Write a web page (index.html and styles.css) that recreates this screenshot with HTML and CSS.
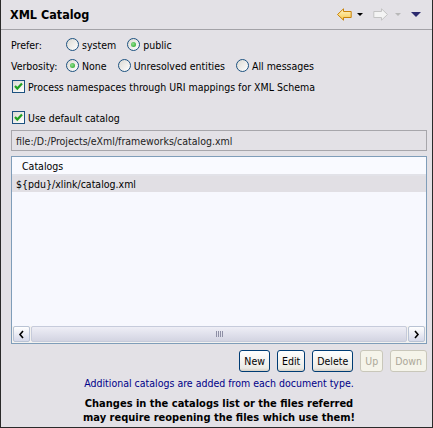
FILE: index.html
```html
<!DOCTYPE html>
<html>
<head>
<meta charset="utf-8">
<link rel="stylesheet" href="styles.css">
</head>
<body>
<div class="panel">
  <div class="titlebar">
    <span class="title">XML Catalog</span>
    <div class="tools">
      <svg class="arrow" width="15" height="13" viewBox="0 0 15 13">
        <defs><linearGradient id="gy" x1="0" y1="0" x2="0" y2="1"><stop offset="0" stop-color="#fff6c8"/><stop offset="1" stop-color="#f7c84a"/></linearGradient></defs>
        <path d="M0.5 6.5 L6.5 0.8 L6.5 3.5 L14.2 3.5 L14.2 9.5 L6.5 9.5 L6.5 12.2 Z" fill="url(#gy)" stroke="#c8820a" stroke-width="1" stroke-linejoin="round"/>
      </svg>
      <span class="tri black"></span>
      <svg class="arrow fwd" width="15" height="13" viewBox="0 0 15 13">
        <path d="M14.5 6.5 L8.5 0.8 L8.5 3.5 L0.8 3.5 L0.8 9.5 L8.5 9.5 L8.5 12.2 Z" fill="#f4f4f4" stroke="#c4c4c4" stroke-width="1" stroke-linejoin="round"/>
      </svg>
      <span class="tri grey"></span>
      <span class="tri navy"></span>
    </div>
  </div>
  <div class="content">
    <div class="row">
      <span class="label">Prefer:</span>
      <span class="opt"><span class="radio"></span>system</span>
      <span class="opt"><span class="radio on"></span>public</span>
    </div>
    <div class="row">
      <span class="label">Verbosity:</span>
      <span class="opt"><span class="radio on"></span>None</span>
      <span class="opt"><span class="radio"></span>Unresolved entities</span>
      <span class="opt"><span class="radio"></span>All messages</span>
    </div>
    <div class="row">
      <span class="check"><svg width="11" height="11" viewBox="0 0 11 11"><path d="M2 5 L4.3 7.6 L9 2.5" fill="none" stroke="#21a121" stroke-width="2.2"/></svg></span>
      <span class="clabel">Process namespaces through URI mappings for XML Schema</span>
    </div>
    <div class="row gap">
      <span class="check"><svg width="11" height="11" viewBox="0 0 11 11"><path d="M2 5 L4.3 7.6 L9 2.5" fill="none" stroke="#21a121" stroke-width="2.2"/></svg></span>
      <span class="clabel">Use default catalog</span>
    </div>
    <div class="field">file:/D:/Projects/eXml/frameworks/catalog.xml</div>
    <div class="table">
      <div class="thead">Catalogs</div>
      <div class="trow">${pdu}/xlink/catalog.xml</div>
      <div class="tfill"></div>
      <div class="hscroll">
        <span class="sbtn"><svg width="7" height="9" viewBox="0 0 7 9"><path d="M5 1 L2 4.5 L5 8" fill="none" stroke="#000" stroke-width="1.6"/></svg></span>
        <span class="thumb"><span class="grip"></span></span>
        <span class="sbtn"><svg width="7" height="9" viewBox="0 0 7 9"><path d="M2 1 L5 4.5 L2 8" fill="none" stroke="#000" stroke-width="1.6"/></svg></span>
      </div>
    </div>
    <div class="buttons">
      <button class="btn">New</button>
      <button class="btn">Edit</button>
      <button class="btn">Delete</button>
      <button class="btn off">Up</button>
      <button class="btn off">Down</button>
    </div>
    <p class="note">Additional catalogs are added from each document type.</p>
    <p class="warn">Changes in the catalogs list or the files referred<br>may require reopening the files which use them!</p>
  </div>
</div>
</body>
</html>
```
FILE: styles.css
```css
html, body {
  margin: 0;
  padding: 0;
  background: #e3e1e6;
}
.panel {
  width: 433px;
  height: 428px;
  box-sizing: border-box;
  border-left: 1px solid #2a2a2a;
  border-right: 1px solid #2a2a2a;
  border-bottom: 1px solid #2a2a2a;
  background: #e3e1e6;
  font-family: "DejaVu Sans Condensed", "Liberation Sans", sans-serif;
  font-size: 10.5px;
  color: #000;
}
.titlebar {
  height: 29px;
  border-bottom: 1px solid #a3a2a7;
  display: flex;
  align-items: center;
  padding: 0 11px 0 9px;
}
.title {
  font-weight: bold;
  font-size: 12.5px;
}
.tools {
  margin-left: auto;
  display: flex;
  align-items: center;
}
.arrow { display: block; }
.tri {
  width: 0;
  height: 0;
  border-style: solid;
}
.tri.black {
  border-width: 3px 3px 0 3px;
  border-color: #000 transparent transparent transparent;
  margin: 0 10px 0 5px;
}
.tri.grey {
  border-width: 3px 3px 0 3px;
  border-color: #b8b8b8 transparent transparent transparent;
  margin: 0 0 0 7px;
}
.tri.navy {
  border-width: 5px 5px 0 5px;
  border-color: #2c2a6e transparent transparent transparent;
  margin: 0 0 0 10px;
}
.content {
  padding: 4px 5px 0 10px;
}
.row {
  height: 21px;
  display: flex;
  align-items: center;
}
.row.gap { margin-top: 10px; }
.label {
  width: 55px;
}
.opt {
  display: flex;
  align-items: center;
  gap: 3px;
  margin-right: 11px;
}
.radio {
  width: 13px;
  height: 13px;
  box-sizing: border-box;
  border: 1px solid #1c5180;
  border-radius: 50%;
  background: linear-gradient(135deg, #dcdad3, #ffffff);
  display: flex;
  align-items: center;
  justify-content: center;
}
.radio.on::after {
  content: "";
  width: 5px;
  height: 5px;
  border-radius: 50%;
  background: radial-gradient(circle at 40% 40%, #8ee08e, #21a121);
}
.check {
  width: 13px;
  height: 13px;
  box-sizing: border-box;
  margin-left: 1px;
  border: 1px solid #1c5180;
  background: linear-gradient(135deg, #dcdad3, #ffffff);
  display: flex;
  align-items: center;
  justify-content: center;
}
.check svg { display: block; }
.clabel { margin-left: 3px; }
.field {
  margin-top: 2px;
  height: 21px;
  box-sizing: border-box;
  border: 1px solid #a7a6ab;
  padding-left: 4px;
  display: flex;
  align-items: center;
  color: #222;
}
.table {
  margin-top: 5px;
  height: 188px;
  box-sizing: border-box;
  border: 1px solid #7f9db9;
  background: #f7f8fe;
  display: flex;
  flex-direction: column;
}
.thead {
  height: 17px;
  border-bottom: 2px solid #e2e2e8;
  padding-left: 10px;
  display: flex;
  align-items: center;
  background: #f9faff;
}
.trow {
  height: 16px;
  background: #e1dfe4;
  padding-left: 4px;
  display: flex;
  align-items: center;
}
.tfill { flex: 1; }
.hscroll {
  height: 17px;
  display: flex;
  padding: 0 1px 1px 1px;
  box-sizing: border-box;
  background: #f3f2f0;
  gap: 1px;
}
.sbtn {
  width: 17px;
  box-sizing: border-box;
  border: 1px solid #b9c3d4;
  border-radius: 2px;
  background: linear-gradient(#ffffff, #d6d9ea);
  display: flex;
  align-items: center;
  justify-content: center;
}
.thumb {
  flex: 1;
  border: 1px solid #c6cbdb;
  border-radius: 2px;
  background: linear-gradient(#eeeef6, #d3d4e2);
  display: flex;
  align-items: center;
  justify-content: center;
}
.grip {
  width: 7px;
  height: 6px;
  background: repeating-linear-gradient(90deg, #8e8fa5 0 1px, transparent 1px 2px);
}
.buttons {
  margin-top: 6px;
  display: flex;
  justify-content: flex-end;
  gap: 7px;
}
.btn {
  height: 22px;
  box-sizing: border-box;
  padding: 0 4px;
  font-family: "DejaVu Sans Condensed", "Liberation Sans", sans-serif;
  font-size: 10.5px;
  color: #000;
  border: 1px solid #003c74;
  border-radius: 3px;
  background: linear-gradient(#ffffff, #ecebe6 85%, #d6d0c5);
}
.btn.off {
  color: #aca899;
  border-color: #c9c7ba;
  background: #f5f4ea;
}
.note {
  margin: 4px 0 0 0;
  text-align: center;
  color: #000088;
  line-height: 14px;
}
.warn {
  margin: 7px 0 0 0;
  text-align: center;
  font-weight: bold;
  font-size: 11px;
  line-height: 14px;
}
```
